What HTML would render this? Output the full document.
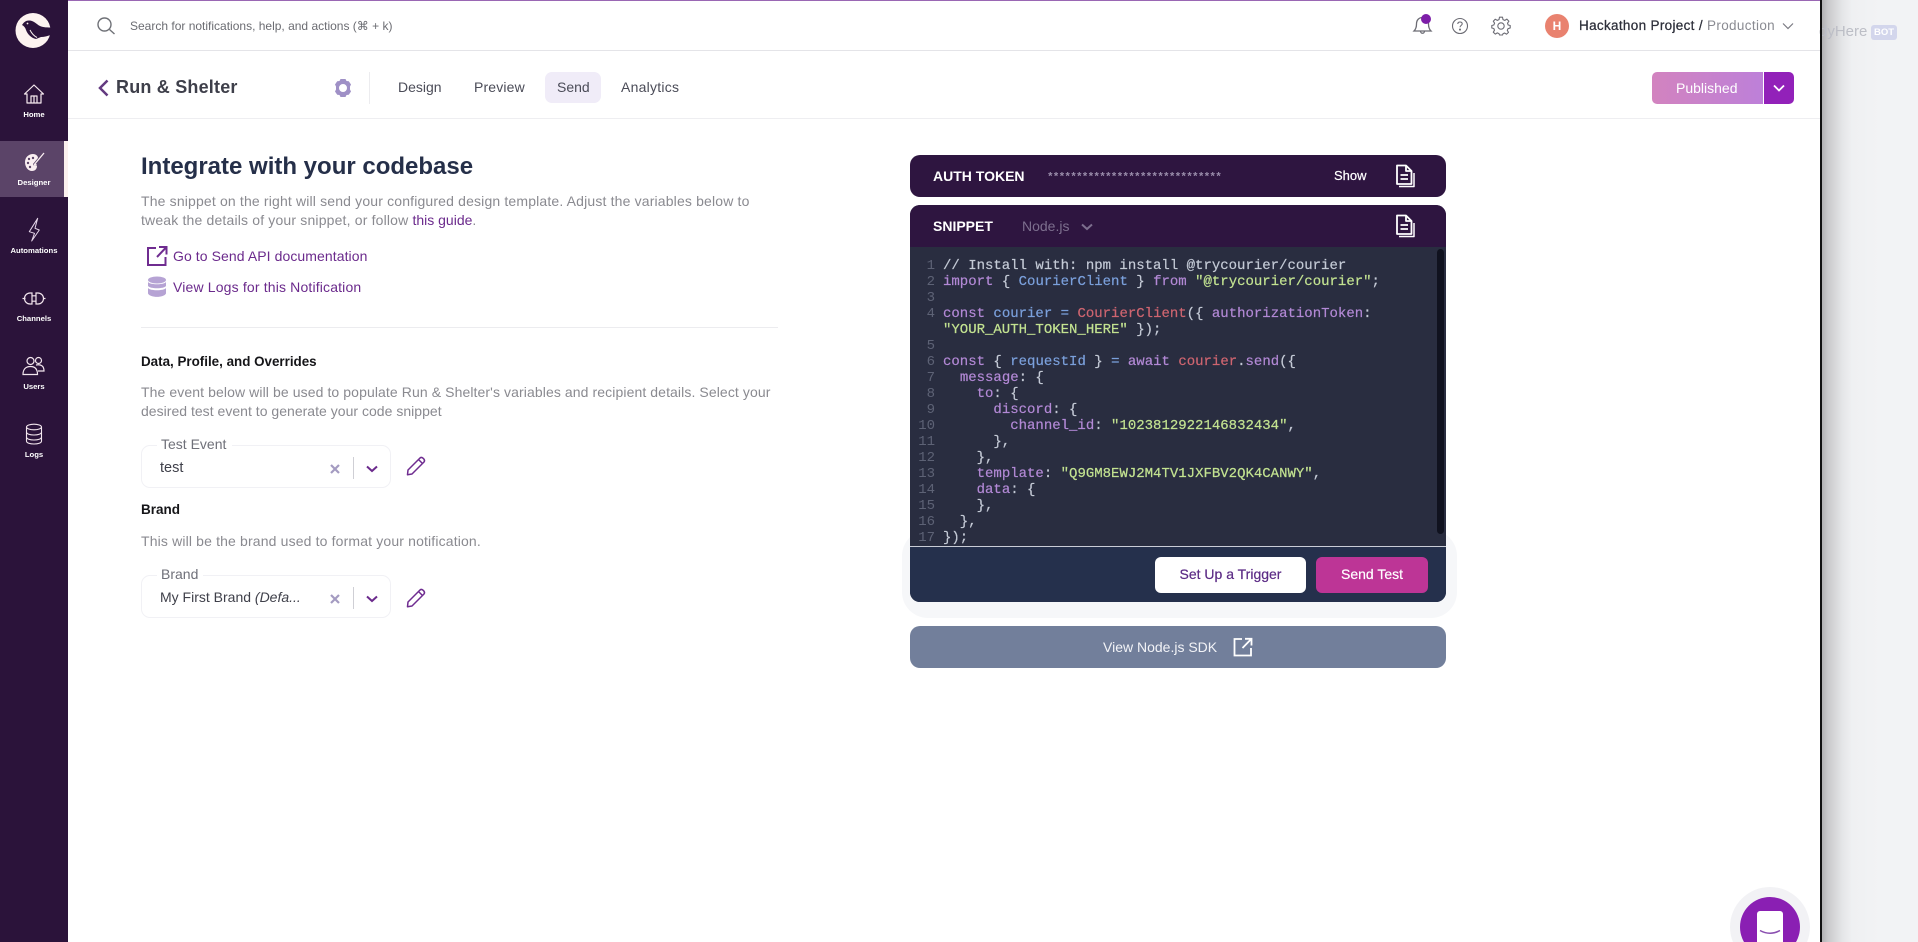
<!DOCTYPE html>
<html><head><meta charset="utf-8"><title>Run &amp; Shelter</title>
<style>
*{box-sizing:border-box}
html,body{margin:0;padding:0;width:1918px;height:942px;overflow:hidden;background:#fff;font-family:"Liberation Sans",sans-serif}
#w{position:relative;width:1918px;height:942px;overflow:hidden;background:#fff}
.a{position:absolute}
.t{position:absolute;white-space:nowrap;line-height:20px;height:20px;font-size:14px}
.s{position:absolute;overflow:visible}
.nav{position:absolute;left:0;width:68px;text-align:center;color:#fff;font-size:7.7px;font-weight:700;line-height:10px;white-space:nowrap}
.g{color:#8a8a90}
.p{color:#6b2a8c}
.h{color:#151518;font-weight:700}
.c{position:absolute;left:943px;white-space:pre;font:14px/16px "Liberation Mono",monospace;color:#c4cad6;height:16px;-webkit-text-stroke:.2px}
.n{position:absolute;left:915px;width:20px;text-align:right;font:14px/16px "Liberation Mono",monospace;color:#5d6275;height:16px}
.k{color:#b389d6}.b{color:#7ba0dc}.r{color:#cf6570}.y{color:#c3e391}
</style></head><body><div id="w">

<!-- window backdrop on right -->
<div class="a" style="left:1820px;top:0;width:98px;height:942px;background:linear-gradient(90deg,#a9a9ab 0,#c9c9cb 8px,#e4e5e7 22px,#eff0f2 32px,#f2f3f5 60px)"></div>
<div class="t" style="left:1819px;top:22px;color:#bcbec6;font-size:15px">dyHere</div>
<div class="a" style="left:1871px;top:25px;width:26px;height:15px;background:#d3d6ec;border-radius:3px;color:#fff;font-size:9.5px;font-weight:700;text-align:center;line-height:15px">BOT</div>
<div class="a" style="left:1820px;top:0;width:1.5px;height:942px;background:#111"></div>

<!-- top line -->
<div class="a" style="left:0;top:0;width:1820px;height:1px;background:#9a67b4"></div>
<div class="a" style="left:68px;top:50px;width:1752px;height:1px;background:#e4e4e8"></div>
<div class="a" style="left:68px;top:118px;width:1752px;height:1px;background:#eeeef1"></div>

<!-- sidebar -->
<div class="a" style="left:0;top:0;width:68px;height:942px;background:#2b133a"></div>
<div class="a" style="left:0;top:141px;width:64px;height:56px;background:#5b4468"></div>
<div class="a" style="left:64px;top:141px;width:4px;height:56px;background:#fbf1ee"></div>

<svg class="s" style="left:8px;top:5px" width="52" height="52" viewBox="0 0 52 52">
<circle cx="25" cy="25.500" r="17.500" fill="#fdf3f0"/>
<path d="M14 20 C16 17 18 15.500 21 15.500 C26 15.500 28 19 32 21 C35 22.500 40 22.500 44 22.500 L44 29.500 C40 31 36 32 33 32 L28 34 C23 33 19.500 29 18 25 C17.500 23 16 21 14 20Z" fill="#2b133a"/>
<circle cx="19.500" cy="18.500" r=".9" fill="#fdf3f0"/>
<path d="M22 25 C24 29 26 31 29 32.500" stroke="#fdf3f0" stroke-width="1" fill="none"/>
</svg>

<svg class="s" style="left:23px;top:83px" width="22" height="22" viewBox="0 0 22 22" fill="none" stroke="#f6e9ef" stroke-width="1.200" stroke-linejoin="round">
<path d="M1.500 11 L11 2 L20.500 11 L18 11 L18 20 L4 20 L4 11Z"/><path d="M8 20 V13 H14 V20 M11 13 V20"/>
</svg>
<div class="nav" style="top:110px">Home</div>

<svg class="s" style="left:23px;top:151px" width="22" height="22" viewBox="0 0 22 22">
<path d="M2 11 C2 6 6 3 10 3 C13 3 15 5 15 7 L10 13 C10 15 13 15 14 15 C14 18 12 20 9 20 C5 20 2 16 2 11Z" fill="#fbeff2"/>
<circle cx="6" cy="8" r="1.200" fill="#5b4468"/><circle cx="10" cy="7" r="1.200" fill="#5b4468"/><circle cx="5" cy="12" r="1.200" fill="#5b4468"/><circle cx="7" cy="16" r="1.200" fill="#5b4468"/>
<path d="M11 14 L21 2" stroke="#fbeff2" stroke-width="1.300"/><path d="M10 15.500 L13 12.500 L14 14.500 Z" fill="#fbeff2"/>
</svg>
<div class="nav" style="top:178px">Designer</div>

<svg class="s" style="left:0;top:0" width="68" height="260" viewBox="0 0 68 260" fill="none" stroke="#e6d6ea" stroke-width="1" stroke-linejoin="round">
<path d="M37.700 218.300 L29.300 231.700 L34.500 233.300 L31.700 241 L39.300 230 L35 228.300 Z"/>
</svg>
<div class="nav" style="top:246px">Automations</div>

<svg class="s" style="left:0;top:280px" width="68" height="40" viewBox="0 0 68 40" fill="none" stroke="#f3e6ee" stroke-width="1.200">
<path d="M22.500 18.500 H25.500 M32 13 H30 A5.500 5.500 0 0 0 30 24 H32 Z M32 15.800 H36 M32 21.200 H36 M36 13 H38 A5.500 5.500 0 0 1 38 24 H36 Z M43 18.500 H45.500"/>
</svg>
<div class="nav" style="top:314px">Channels</div>

<svg class="s" style="left:22px;top:356px" width="24" height="20" viewBox="0 0 24 20" fill="none" stroke="#f3e6ee" stroke-width="1.200">
<circle cx="8.500" cy="5" r="3.500"/><circle cx="16.500" cy="4.500" r="3"/><path d="M1 18.500 C1 13 4 10.500 8.500 10.500 C13 10.500 15.500 13 15.500 18.500 Z"/><path d="M14 9 C19 8 22 10 22 15 L16 15"/>
</svg>
<div class="nav" style="top:382px">Users</div>

<svg class="s" style="left:25px;top:423px" width="18" height="22" viewBox="0 0 18 22" fill="none" stroke="#f3e6ee" stroke-width="1.100">
<ellipse cx="9" cy="4" rx="7.500" ry="2.800"/><path d="M1.500 4 V18 C1.500 20 5 21 9 21 C13 21 16.500 20 16.500 18 V4"/><path d="M1.500 9 C1.500 11 5 12 9 12 C13 12 16.500 11 16.500 9 M1.500 14 C1.500 16 5 17 9 17 C13 17 16.500 16 16.500 14"/>
</svg>
<div class="nav" style="top:450px">Logs</div>

<!-- search -->
<svg class="s" style="left:96px;top:16px" width="20" height="20" viewBox="0 0 20 20" fill="none" stroke="#6f7177" stroke-width="1.400"><circle cx="8.500" cy="8.500" r="6.500"/><path d="M13.500 13.500 L18.500 18"/></svg>
<div class="t" style="left:130px;top:16px;font-size:12px;color:#6b6c72">Search for notifications, help, and actions (⌘ + k)</div>

<!-- top right -->
<svg class="s" style="left:1412px;top:13px" width="22" height="24" viewBox="0 0 22 24" fill="none" stroke="#6c6c74" stroke-width="1.300">
<path d="M2 18 C4 16 4.500 14 4.500 11 C4.500 7 7 4.500 10.500 4.500 C14 4.500 16.500 7 16.500 11 C16.500 14 17 16 19 18 Z"/><path d="M8.500 18 C8.500 21 12.500 21 12.500 18"/>
</svg>
<div class="a" style="left:1421px;top:14px;width:10px;height:10px;border-radius:50%;background:#7d1ea8"></div>
<svg class="s" style="left:1451px;top:17px" width="18" height="18" viewBox="0 0 18 18" fill="none" stroke="#6c6c74" stroke-width="1.100"><circle cx="9" cy="9" r="7.500"/><path d="M6.800 7 C6.800 5.700 7.800 5 9 5 C10.300 5 11.200 5.800 11.200 6.900 C11.200 8.300 9 8.500 9 10.300"/><circle cx="9" cy="12.600" r=".5" fill="#6c6c74"/></svg>
<svg class="s" style="left:1491px;top:16px" width="20" height="20" viewBox="0 0 20 20" fill="none" stroke="#6c6c74" stroke-width="1.100" stroke-linejoin="round"><circle cx="10" cy="10" r="3.200"/><path d="M8.500 1.200 H11.500 L12 3.600 L13.800 4.400 L15.900 3.100 L17.900 5.200 L16.500 7.200 L17.200 9 L19.200 9.500 V12 L17 12.700 L16.300 14.300 L17.500 16.400 L15.500 18.200 L13.500 17 L12 17.700 L11.500 19 H8.500 L8 17.600 L6.300 16.900 L4.300 18.100 L2.300 16.200 L3.500 14.200 L2.800 12.500 L0.800 12 V9.500 L2.800 9 L3.600 7.200 L2.300 5.200 L4.200 3.200 L6.300 4.400 L8 3.600 Z"/></svg>
<div class="a" style="left:1545px;top:14px;width:24px;height:24px;border-radius:50%;background:#e9826f;color:#fff;font-size:12px;font-weight:700;text-align:center;line-height:24px">H</div>
<div class="t" style="left:1579px;top:16px;color:#2d2f3a;font-size:13.500px;letter-spacing:.32px;-webkit-text-stroke:.25px #2d2f3a">Hackathon Project /</div>
<div class="t" style="left:1707px;top:16px;color:#8a8b92;font-size:13.500px;letter-spacing:.35px">Production</div>
<svg class="s" style="left:1782px;top:22px" width="12" height="8" viewBox="0 0 12 8" fill="none" stroke="#7a7a82" stroke-width="1.200"><path d="M1 1.500 L6 6.500 L11 1.500"/></svg>

<!-- page header -->
<svg class="s" style="left:97px;top:79px" width="13" height="18" viewBox="0 0 13 18" fill="none" stroke="#633a80" stroke-width="2.500"><path d="M10.500 1.500 L3 9 L10.500 16.500"/></svg>
<div class="t" style="left:116px;top:77px;font-size:18px;font-weight:700;color:#3e3f4a;letter-spacing:.2px">Run &amp; Shelter</div>
<svg class="s" style="left:333px;top:78px" width="20" height="20" viewBox="0 0 20 20"><path fill="#9f90c6" fill-rule="evenodd" d="M7.500 1 H12.500 L13.500 3 L15.800 3.300 L18 6.500 L17 8.500 V11.500 L18 13.500 L15.800 16.700 L13.500 17 L12.500 19 H7.500 L6.500 17 L4.200 16.700 L2 13.500 L3 11.500 V8.500 L2 6.500 L4.200 3.300 L6.500 3 Z M10 6 A4 4 0 1 0 10 14 A4 4 0 1 0 10 6Z"/></svg>
<div class="a" style="left:369px;top:72px;width:1px;height:32px;background:#ececef"></div>
<div class="a" style="left:545px;top:72px;width:56px;height:31px;background:#f0ecf8;border-radius:7px"></div>
<div class="t" style="left:398px;top:77px;color:#4b4c58">Design</div>
<div class="t" style="left:474px;top:77px;color:#4b4c58;letter-spacing:.15px">Preview</div>
<div class="t" style="left:557px;top:77px;color:#4b4c58">Send</div>
<div class="t" style="left:621px;top:77px;color:#4b4c58;letter-spacing:.25px">Analytics</div>

<div class="a" style="left:1652px;top:72px;width:111px;height:32px;border-radius:5px 0 0 5px;background:linear-gradient(90deg,#d283bf,#bd80d9)"></div>
<div class="t" style="left:1676px;top:78px;color:#fff;font-size:14px">Published</div>
<div class="a" style="left:1764px;top:72px;width:30px;height:32px;border-radius:0 5px 5px 0;background:#9221b9"></div>
<svg class="s" style="left:1773px;top:84px" width="12" height="9" viewBox="0 0 12 9" fill="none" stroke="#fff" stroke-width="1.800"><path d="M1 1.500 L6 6.500 L11 1.500"/></svg>

<!-- left content -->
<div class="t" style="left:141px;top:157px;font-size:24px;font-weight:700;color:#252f49">Integrate with your codebase</div>
<div class="t g" style="left:141px;top:191px;letter-spacing:.16px">The snippet on the right will send your configured design template. Adjust the variables below to</div>
<div class="t g" style="left:141px;top:210px;letter-spacing:.17px">tweak the details of your snippet, or follow <span class="p" style="letter-spacing:0">this guide</span>.</div>

<svg class="s" style="left:146px;top:245px" width="22" height="22" viewBox="0 0 22 22" fill="none" stroke="#6f2c90" stroke-width="2"><path d="M10 3 H2 V20 H19.500 V12"/><path d="M11 12 L20 2.500 M13 2 H20.500 V9.500"/></svg>
<div class="t p" style="left:173px;top:246px;letter-spacing:.08px">Go to Send API documentation</div>
<svg class="s" style="left:147px;top:276px" width="20" height="22" viewBox="0 0 20 22" fill="#b6a3d4"><ellipse cx="10" cy="4" rx="9" ry="3.500"/><path d="M1 6 C3 9 17 9 19 6 V10 C17 13 3 13 1 10Z"/><path d="M1 12 C3 15 17 15 19 12 V17.500 C17 22 3 22 1 17.500Z"/></svg>
<div class="t p" style="left:173px;top:277px;letter-spacing:.16px">View Logs for this Notification</div>
<div class="a" style="left:141px;top:327px;width:637px;height:1px;background:#ececef"></div>

<div class="t h" style="left:141px;top:352px;font-size:13.400px">Data, Profile, and Overrides</div>
<div class="t g" style="left:141px;top:382px;letter-spacing:.096px">The event below will be used to populate Run &amp; Shelter's variables and recipient details. Select your</div>
<div class="t g" style="left:141px;top:401px;letter-spacing:.02px">desired test event to generate your code snippet</div>

<div class="a" style="left:141px;top:445px;width:250px;height:43px;border:1px solid #f1f1f5;border-radius:9px"></div>
<div class="a" style="left:157px;top:440px;width:75px;height:10px;background:#fff"></div>
<div class="t" style="left:161px;top:434px;color:#6f7079">Test Event</div>
<div class="t" style="left:160px;top:458px;color:#3f404a;font-size:14.500px">test</div>
<svg class="s" style="left:330px;top:464px" width="10" height="10" viewBox="0 0 10 10" stroke="#a49bc1" stroke-width="2.200"><path d="M1 1 L9 9 M9 1 L1 9"/></svg>
<div class="a" style="left:353px;top:457px;width:1px;height:22px;background:#cfcfd5"></div>
<svg class="s" style="left:366px;top:465px" width="12" height="8" viewBox="0 0 12 8" fill="none" stroke="#6b2a8c" stroke-width="2"><path d="M1 1.500 L6 6 L11 1.500"/></svg>
<svg class="s" style="left:406px;top:456px" width="20" height="20" viewBox="0 0 20 20" fill="none" stroke="#6f2c90" stroke-width="1.500" stroke-linejoin="round"><path d="M2 14 L14 2 Q15.500 .800 17 2.200 L18 3.200 Q19 4.800 18 6 L6 18 L1.500 18.700 Z M12.500 3.500 L16.500 7.500"/></svg>

<div class="t h" style="left:141px;top:500px;font-size:13.500px">Brand</div>
<div class="t g" style="left:141px;top:531px;letter-spacing:.15px">This will be the brand used to format your notification.</div>

<div class="a" style="left:141px;top:575px;width:250px;height:43px;border:1px solid #f1f1f5;border-radius:9px"></div>
<div class="a" style="left:157px;top:570px;width:46px;height:10px;background:#fff"></div>
<div class="t" style="left:161px;top:564px;color:#6f7079">Brand</div>
<div class="t" style="left:160px;top:587px;color:#3f404a">My First Brand <i>(Defa...</i></div>
<svg class="s" style="left:330px;top:594px" width="10" height="10" viewBox="0 0 10 10" stroke="#a49bc1" stroke-width="2.200"><path d="M1 1 L9 9 M9 1 L1 9"/></svg>
<div class="a" style="left:353px;top:587px;width:1px;height:22px;background:#cfcfd5"></div>
<svg class="s" style="left:366px;top:595px" width="12" height="8" viewBox="0 0 12 8" fill="none" stroke="#6b2a8c" stroke-width="2"><path d="M1 1.500 L6 6 L11 1.500"/></svg>
<svg class="s" style="left:406px;top:588px" width="20" height="20" viewBox="0 0 20 20" fill="none" stroke="#6f2c90" stroke-width="1.500" stroke-linejoin="round"><path d="M2 14 L14 2 Q15.500 .800 17 2.200 L18 3.200 Q19 4.800 18 6 L6 18 L1.500 18.700 Z M12.500 3.500 L16.500 7.500"/></svg>

<!-- right panel -->
<div class="a" style="left:902px;top:530px;width:555px;height:88px;border-radius:26px;background:#f6f7f9"></div>
<div class="a" style="left:910px;top:155px;width:536px;height:42px;border-radius:10px;background:#2e1540"></div>
<div class="t" style="left:933px;top:166px;color:#fff;font-weight:700;font-size:14px">AUTH TOKEN</div>
<div class="t" style="left:1047px;top:168px;color:#9a8dab;font-size:11px;font-family:'Liberation Mono',monospace;letter-spacing:-.8px;font-weight:700">******************************</div>
<div class="t" style="left:1334px;top:166px;color:#fff;font-size:13px;-webkit-text-stroke:.2px #fff">Show</div>
<svg class="s" style="left:1395px;top:164px" width="22" height="24" viewBox="0 0 22 24" fill="none" stroke="#fff" stroke-width="1.800" stroke-linejoin="round"><path d="M2 1.500 H11 L16.500 7 V20 H2 Z"/><path d="M11 1.500 V7 H16.500"/><path d="M5.500 11 H13 M5.500 15 H13"/><path d="M4 22.500 H19 V9" stroke-width="1.500"/></svg>

<div class="a" style="left:910px;top:205px;width:536px;height:397px;border-radius:10px;background:#292d40;overflow:hidden">
<div class="a" style="left:0;top:0;width:536px;height:42px;background:#2e1540"></div>
<div class="a" style="left:0;top:341px;width:536px;height:1px;background:#c9ccd6"></div>
<div class="a" style="left:0;top:342px;width:536px;height:55px;background:#25304c"></div>
<div class="a" style="left:527px;top:44px;width:7px;height:285px;border-radius:4px;background:#10121f"></div>
</div>
<div class="t" style="left:933px;top:216px;color:#fff;font-weight:700;font-size:14px">SNIPPET</div>
<div class="t" style="left:1022px;top:216px;color:#7d6f8e;font-size:14px">Node.js</div>
<svg class="s" style="left:1081px;top:223px" width="12" height="8" viewBox="0 0 12 8" fill="none" stroke="#7d6f8e" stroke-width="2"><path d="M1 1.500 L6 6 L11 1.500"/></svg>
<svg class="s" style="left:1395px;top:214px" width="22" height="24" viewBox="0 0 22 24" fill="none" stroke="#fff" stroke-width="1.800" stroke-linejoin="round"><path d="M2 1.500 H11 L16.500 7 V20 H2 Z"/><path d="M11 1.500 V7 H16.500"/><path d="M5.500 11 H13 M5.500 15 H13"/><path d="M4 22.500 H19 V9" stroke-width="1.500"/></svg>

<div class="n" style="top:258px">1</div><div class="c" style="top:258px">// Install with: npm install @trycourier/courier</div>
<div class="n" style="top:274px">2</div><div class="c" style="top:274px"><span class="k">import</span> { <span class="b">CourierClient</span> } <span class="k">from</span> <span class="y">"@trycourier/courier"</span>;</div>
<div class="n" style="top:290px">3</div>
<div class="n" style="top:306px">4</div><div class="c" style="top:306px"><span class="k">const</span> <span class="b">courier</span> <span class="b">=</span> <span class="r">CourierClient</span>({ <span class="k">authorizationToken</span>:</div>
<div class="c" style="top:322px"><span class="y">"YOUR_AUTH_TOKEN_HERE"</span> });</div>
<div class="n" style="top:338px">5</div>
<div class="n" style="top:354px">6</div><div class="c" style="top:354px"><span class="k">const</span> { <span class="b">requestId</span> } <span class="b">=</span> <span class="k">await</span> <span class="r">courier</span>.<span class="k">send</span>({</div>
<div class="n" style="top:370px">7</div><div class="c" style="top:370px">  <span class="k">message</span>: {</div>
<div class="n" style="top:386px">8</div><div class="c" style="top:386px">    <span class="k">to</span>: {</div>
<div class="n" style="top:402px">9</div><div class="c" style="top:402px">      <span class="k">discord</span>: {</div>
<div class="n" style="top:418px">10</div><div class="c" style="top:418px">        <span class="k">channel_id</span>: <span class="y">"1023812922146832434"</span>,</div>
<div class="n" style="top:434px">11</div><div class="c" style="top:434px">      },</div>
<div class="n" style="top:450px">12</div><div class="c" style="top:450px">    },</div>
<div class="n" style="top:466px">13</div><div class="c" style="top:466px">    <span class="k">template</span>: <span class="y">"Q9GM8EWJ2M4TV1JXFBV2QK4CANWY"</span>,</div>
<div class="n" style="top:482px">14</div><div class="c" style="top:482px">    <span class="k">data</span>: {</div>
<div class="n" style="top:498px">15</div><div class="c" style="top:498px">    },</div>
<div class="n" style="top:514px">16</div><div class="c" style="top:514px">  },</div>
<div class="n" style="top:530px">17</div><div class="c" style="top:530px">});</div>

<div class="a" style="left:1155px;top:557px;width:151px;height:36px;background:#fff;border-radius:6px;color:#5b2a85;font-size:14px;text-align:center;line-height:34px;-webkit-text-stroke:.2px #5b2a85">Set Up a Trigger</div>
<div class="a" style="left:1316px;top:557px;width:112px;height:36px;background:#bd3596;border-radius:6px;color:#fff;font-size:14px;text-align:center;line-height:34px;-webkit-text-stroke:.2px #fff">Send Test</div>

<div class="a" style="left:910px;top:626px;width:536px;height:42px;background:#727f9b;border-radius:10px"></div>
<div class="t" style="left:1103px;top:637px;color:#f2f3f7;font-size:14px">View Node.js SDK</div>
<svg class="s" style="left:1233px;top:637px" width="20" height="20" viewBox="0 0 20 20" fill="none" stroke="#fff" stroke-width="1.800"><path d="M9 2 H1.500 V18.500 H18 V11"/><path d="M9.500 11 L18 2.200 M12 1.800 H18.500 V8.500"/></svg>

<!-- chat bubble -->
<div class="a" style="left:1730px;top:887px;width:80px;height:80px;border-radius:50%;background:#f2f2f5"></div>
<div class="a" style="left:1740px;top:897px;width:60px;height:60px;border-radius:50%;background:#8a1fb3"></div>
<div class="a" style="left:1757px;top:911px;width:26px;height:40px;border-radius:3px;background:#fff"></div>
<svg class="s" style="left:1758px;top:929px" width="24" height="8" viewBox="0 0 24 8" fill="none" stroke="#8a4fb0" stroke-width="1.500"><path d="M2 1.500 Q12 7 22 1.500"/></svg>

</div></body></html>
